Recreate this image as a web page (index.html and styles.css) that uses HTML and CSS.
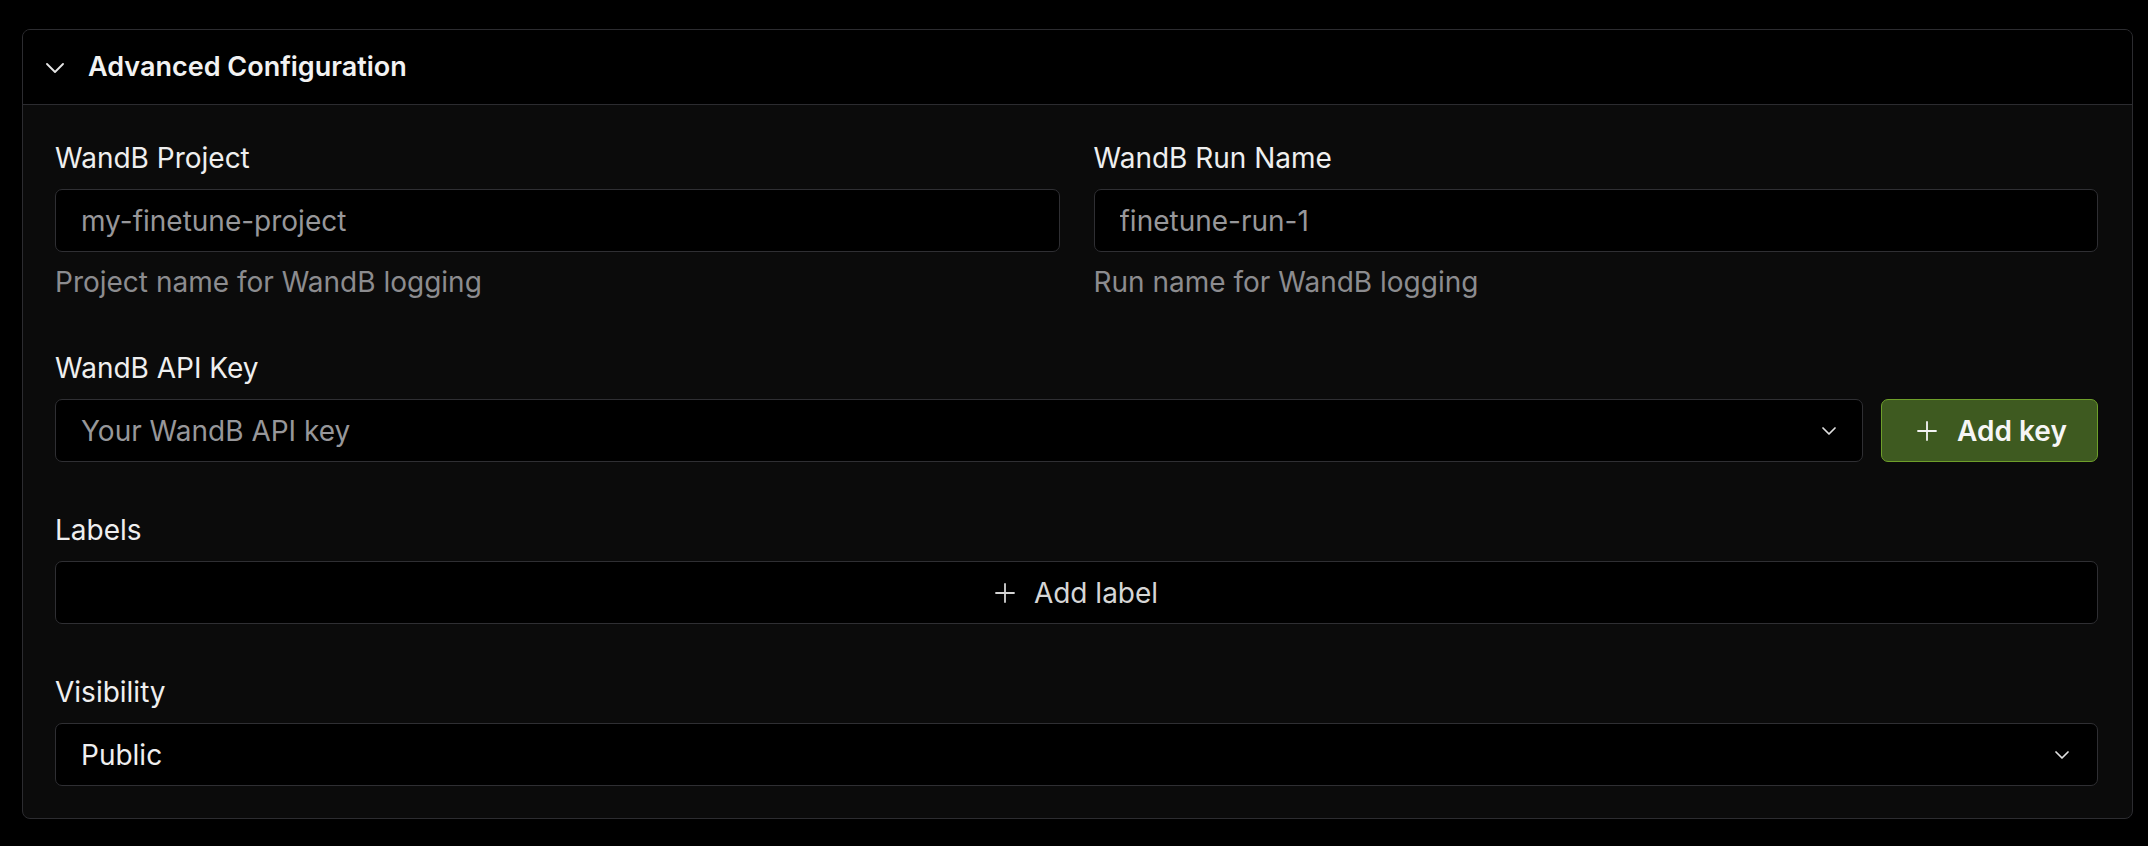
FILE: index.html
```html
<!DOCTYPE html>
<html lang="en">
<head>
<meta charset="utf-8">
<title>Advanced Configuration</title>
<link rel="stylesheet" href="styles.css">
</head>
<body>
<section class="card">
  <header class="card-header">
    <svg class="header-chevron" width="18" height="10" viewBox="0 0 18 10" aria-hidden="true">
      <path d="M1 1 L9 9 L17 1" fill="none" stroke="#e6e6e6" stroke-width="1.8" stroke-linecap="round" stroke-linejoin="round"/>
    </svg>
    <h2 class="card-title">Advanced Configuration</h2>
  </header>
  <div class="card-body">
    <div class="row two-col">
      <div class="field">
        <label class="field-label">WandB Project</label>
        <input class="text-input" type="text" placeholder="my-finetune-project">
        <p class="field-help">Project name for WandB logging</p>
      </div>
      <div class="field">
        <label class="field-label">WandB Run Name</label>
        <input class="text-input" type="text" placeholder="finetune-run-1">
        <p class="field-help">Run name for WandB logging</p>
      </div>
    </div>

    <div class="field spaced">
      <label class="field-label">WandB API Key</label>
      <div class="key-row">
        <div class="select grow">
          <span class="select-placeholder">Your WandB API key</span>
          <svg class="select-chevron" width="14" height="8" viewBox="0 0 14 8" aria-hidden="true">
            <path d="M1 1 L7 7 L13 1" fill="none" stroke="#e0e0e0" stroke-width="1.7" stroke-linecap="round" stroke-linejoin="round"/>
          </svg>
        </div>
        <button class="btn-primary" type="button">
          <svg width="20" height="20" viewBox="0 0 20 20" aria-hidden="true">
            <path d="M10 1 V19 M1 10 H19" fill="none" stroke="#f4f4f4" stroke-width="1.8" stroke-linecap="round"/>
          </svg>
          <span>Add key</span>
        </button>
      </div>
    </div>

    <div class="field spaced">
      <label class="field-label">Labels</label>
      <button class="add-label" type="button">
        <svg width="20" height="20" viewBox="0 0 20 20" aria-hidden="true">
          <path d="M10 1 V19 M1 10 H19" fill="none" stroke="#d4d4d4" stroke-width="1.8" stroke-linecap="round"/>
        </svg>
        <span>Add label</span>
      </button>
    </div>

    <div class="field spaced">
      <label class="field-label">Visibility</label>
      <div class="select">
        <span class="select-value">Public</span>
        <svg class="select-chevron" width="14" height="8" viewBox="0 0 14 8" aria-hidden="true">
          <path d="M1 1 L7 7 L13 1" fill="none" stroke="#e0e0e0" stroke-width="1.7" stroke-linecap="round" stroke-linejoin="round"/>
        </svg>
      </div>
    </div>
  </div>
</section>
</body>
</html>
```

FILE: styles.css
```css
* {
  box-sizing: border-box;
}

html, body {
  margin: 0;
  background: #000;
}

body {
  padding: 29px 0 0 22px;
  font-family: "Inter", "Noto Sans", sans-serif;
  color: #ededed;
}

.card {
  width: 2111px;
  border: 1px solid #2c2c30;
  border-radius: 8px;
  background: #0b0b0b;
  overflow: hidden;
}

.card-header {
  height: 75px;
  display: flex;
  align-items: center;
  gap: 24px;
  padding-left: 23px;
  background: #000;
  border-bottom: 1px solid #2c2c30;
}

.header-chevron {
  flex: none;
  margin-top: 2px;
}

.card-title {
  margin: 0;
  font-size: 27px;
  font-weight: 600;
  line-height: 36px;
  color: #f2f2f2;
}

.card-body {
  padding: 35px 34px 32px 32px;
}

.two-col {
  display: grid;
  grid-template-columns: 1fr 1fr;
  gap: 34px;
}

.field {
  display: flex;
  flex-direction: column;
}

.field.spaced {
  margin-top: 50px;
}

.field-label {
  font-size: 28px;
  line-height: 36px;
  margin-bottom: 13px;
  color: #efefef;
}

.field-help {
  margin: 12px 0 0;
  font-size: 28px;
  line-height: 36px;
  color: #8c8c8f;
}

.text-input {
  height: 63px;
  width: 100%;
  padding: 0 25px;
  border: 1px solid #2f2f33;
  border-radius: 7px;
  background: #000;
  font-family: inherit;
  font-size: 28px;
  color: #ededed;
  outline: none;
}

.text-input::placeholder {
  color: #97979a;
}

.key-row {
  display: flex;
  gap: 18px;
}

.select {
  height: 63px;
  display: flex;
  align-items: center;
  justify-content: space-between;
  padding: 0 28px 0 25px;
  border: 1px solid #2f2f33;
  border-radius: 7px;
  background: #000;
  font-size: 28px;
}

.select.grow {
  flex: 1 1 auto;
  padding-right: 26px;
}

.select-placeholder {
  color: #97979a;
}

.select-value {
  color: #efefef;
}

.select-chevron {
  flex: none;
}

.btn-primary {
  flex: none;
  width: 217px;
  height: 63px;
  display: flex;
  align-items: center;
  justify-content: center;
  gap: 20px;
  border: 1.5px solid #6e9f2a;
  border-radius: 7px;
  background: #3e5a20;
  font-family: inherit;
  font-size: 28px;
  font-weight: 600;
  color: #f6f6f6;
  padding: 0 0 0 5px;
}

.add-label {
  width: 100%;
  height: 63px;
  display: flex;
  align-items: center;
  justify-content: center;
  gap: 19px;
  border: 1px solid #2f2f33;
  border-radius: 7px;
  background: #000;
  font-family: inherit;
  font-size: 28px;
  color: #d6d6d6;
  padding: 0;
}
```
